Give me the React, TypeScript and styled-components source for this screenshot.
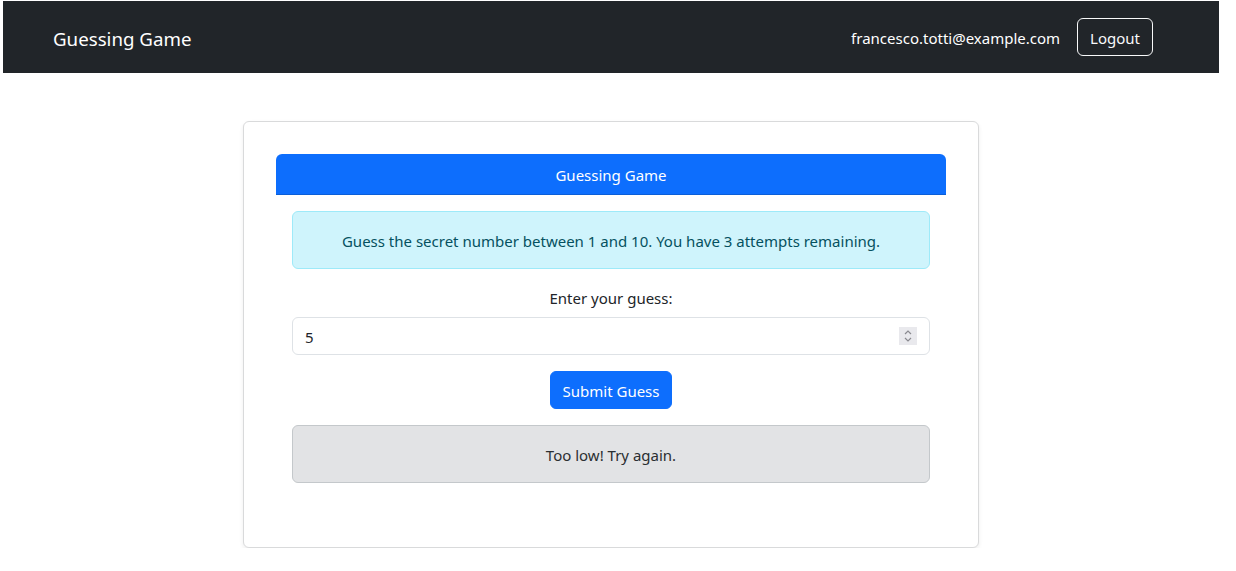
import React from "react";
import styled, { createGlobalStyle } from "styled-components";

const Global = createGlobalStyle`
  html, body { margin: 0; padding: 0; background: #fff; }
  body {
    font-family: "Noto Sans", "Open Sans", sans-serif;
    font-size: 15px;
    line-height: 24px;
    color: #212529;
  }
  * { box-sizing: border-box; }
`;

const Page = styled.div`
  width: 1216px;
  margin: 1px 0 0 3px;
`;

const NavBar = styled.nav`
  height: 72px;
  background: #212529;
  display: flex;
  align-items: center;
  justify-content: space-between;
  padding: 0 66px 0 50px;
`;

const Brand = styled.a`
  color: #fff;
  font-size: 18.7px;
  line-height: 30px;
  padding-top: 3px;
  text-decoration: none;
`;

const UserArea = styled.div`
  display: flex;
  align-items: center;
  gap: 17px;
`;

const Email = styled.span`
  color: #fff;
  padding-top: 2px;
`;

const OutlineButton = styled.button`
  font: inherit;
  color: #f8f9fa;
  background: transparent;
  border: 1px solid #f8f9fa;
  border-radius: 6px;
  height: 38px;
  padding: 2px 12px 0;
`;

const Main = styled.main`
  display: flex;
  justify-content: center;
  padding-top: 48px;
`;

const Card = styled.section`
  width: 736px;
  border: 1px solid #d9dadb;
  border-radius: 6px;
  box-shadow: 0 2px 4px rgba(0, 0, 0, 0.075);
  padding: 32px;
  background: #fff;
`;

const CardHeader = styled.header`
  background: #0d6efd;
  color: #fff;
  text-align: center;
  padding: 9px 16px 7px;
  border-radius: 6px 6px 0 0;
  border-bottom: 1px solid #0b5ed7;
`;

const CardBody = styled.div`
  padding: 16px;
  display: flex;
  flex-direction: column;
  align-items: stretch;
`;

const Alert = styled.div<{ $variant: "info" | "secondary" }>`
  padding: 17px 16px 15px;
  border-radius: 6px;
  text-align: center;
  margin-bottom: 16px;
  border: 1px solid ${(p) => (p.$variant === "info" ? "#9eeaf9" : "#c4c8cb")};
  background: ${(p) => (p.$variant === "info" ? "#cff4fc" : "#e2e3e5")};
  color: ${(p) => (p.$variant === "info" ? "#055160" : "#2b2f32")};
`;

const Label = styled.label`
  text-align: center;
  padding-top: 1px;
  margin-bottom: 7px;
`;

const NumberField = styled.div`
  height: 38px;
  border: 1px solid #dee2e6;
  border-radius: 6px;
  display: flex;
  align-items: center;
  padding: 0 12px;
  margin-bottom: 16px;
`;

const FieldInput = styled.input`
  flex: 1;
  border: 0;
  outline: none;
  font: inherit;
  color: #212529;
  padding: 2px 0 0;
  background: transparent;
`;

const Spinner = styled.span`
  width: 18px;
  height: 18px;
  background: #e9e9ed;
  display: flex;
  align-items: center;
  justify-content: center;
`;

const ButtonRow = styled.div`
  display: flex;
  justify-content: center;
  margin-bottom: 16px;
`;

const PrimaryButton = styled.button`
  font: inherit;
  color: #fff;
  background: #0d6efd;
  border: 1px solid #0d6efd;
  border-radius: 6px;
  height: 38px;
  padding: 2px 12px 0;
`;

export default function App() {
  return (
    <>
      <Global />
      <Page>
        <NavBar>
          <Brand href="#">Guessing Game</Brand>
          <UserArea>
            <Email>francesco.totti@example.com</Email>
            <OutlineButton>Logout</OutlineButton>
          </UserArea>
        </NavBar>
        <Main>
          <Card>
            <CardHeader>Guessing Game</CardHeader>
            <CardBody>
              <Alert $variant="info">
                Guess the secret number between 1 and 10. You have 3 attempts remaining.
              </Alert>
              <Label htmlFor="guess">Enter your guess:</Label>
              <NumberField>
                <FieldInput id="guess" type="text" defaultValue="5" />
                <Spinner>
                  <svg width="10" height="14" viewBox="0 0 10 14" fill="none" stroke="#8a8a90" strokeWidth="1.2">
                    <path d="M2 5 L5 2 L8 5" />
                    <path d="M2 9 L5 12 L8 9" />
                  </svg>
                </Spinner>
              </NumberField>
              <ButtonRow>
                <PrimaryButton>Submit Guess</PrimaryButton>
              </ButtonRow>
              <Alert $variant="secondary">Too low! Try again.</Alert>
            </CardBody>
          </Card>
        </Main>
      </Page>
    </>
  );
}
